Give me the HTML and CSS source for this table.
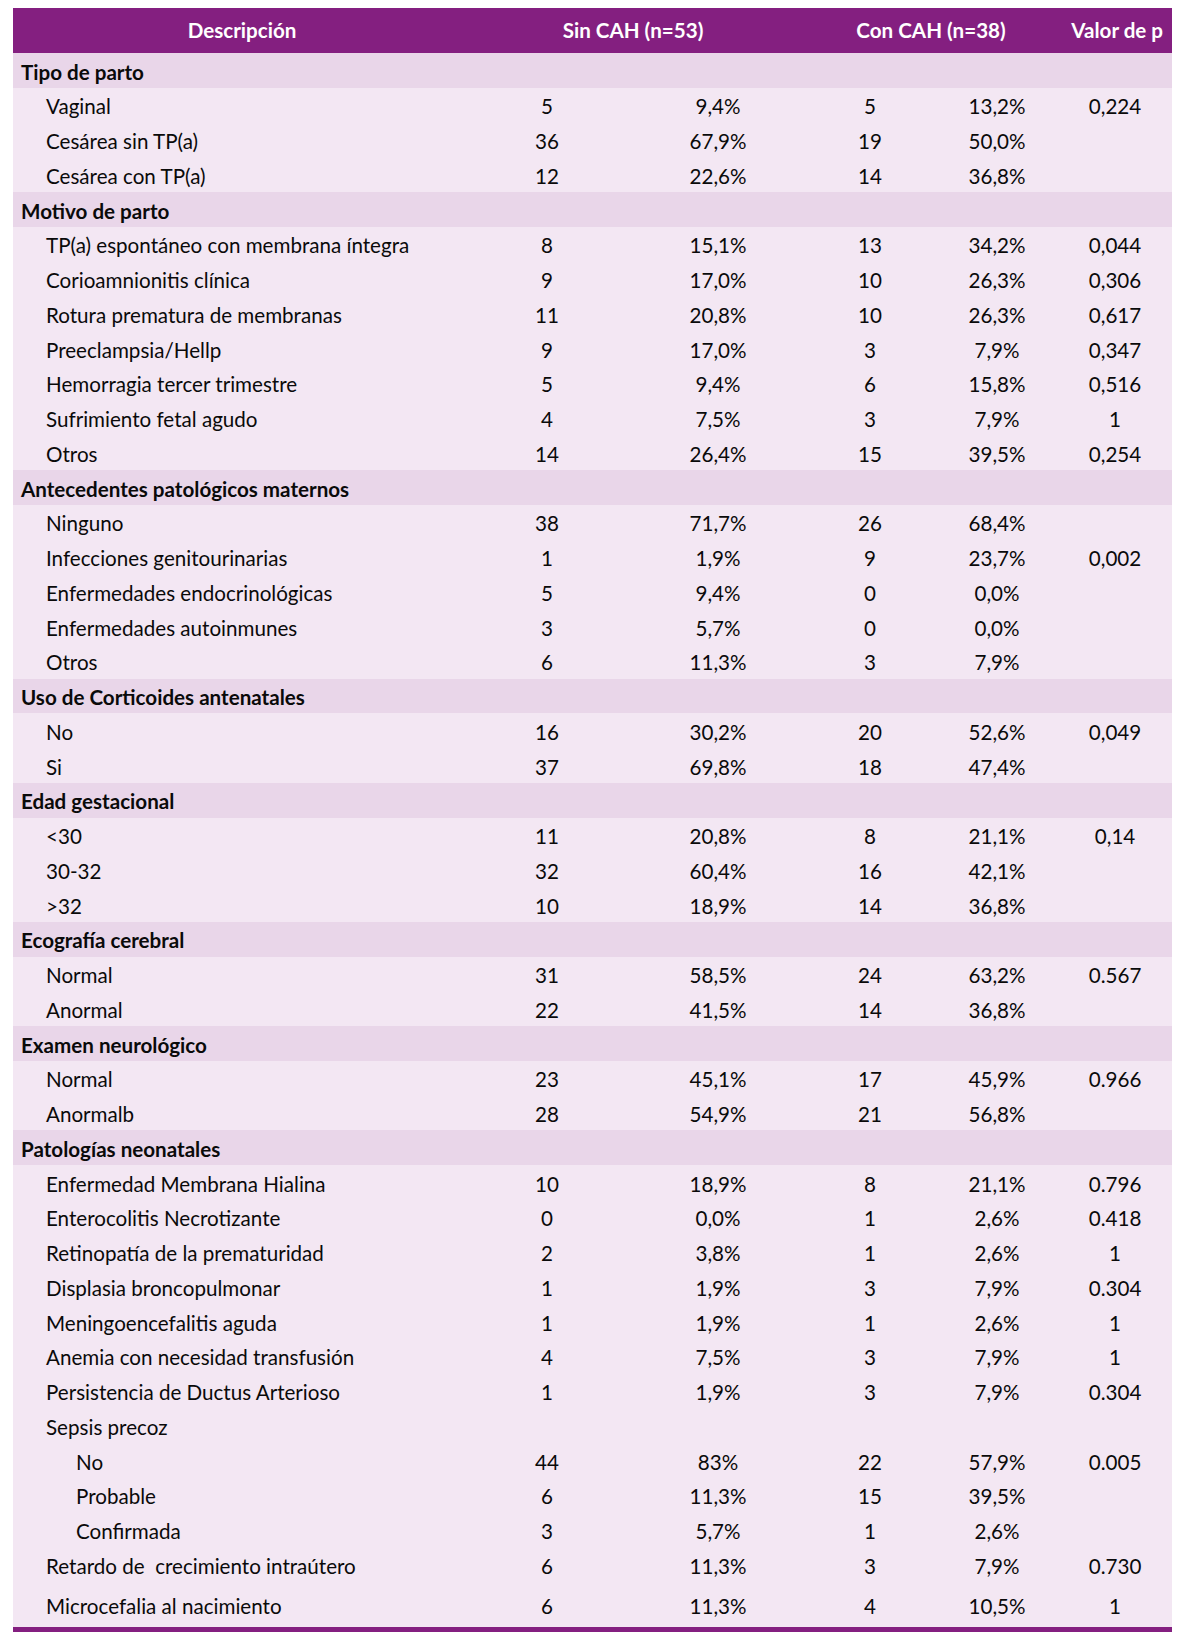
FILE: index.html
```html
<!DOCTYPE html>
<html lang="es">
<head>
<meta charset="utf-8">
<title>Tabla</title>
<link rel="stylesheet" href="styles.css">
</head>
<body>
<div class="wrap">
<table class="t">
<colgroup>
<col class="c-desc"><col class="c-sn"><col class="c-sp"><col class="c-cn"><col class="c-cp"><col class="c-p">
</colgroup>
<thead>
<tr><th class="hd">Descripción</th><th colspan="2">Sin CAH (n=53)</th><th colspan="2">Con CAH (n=38)</th><th class="hp">Valor de p</th></tr>
</thead>
<tbody>
<tr class="sec"><td colspan="6">Tipo de parto</td></tr>
<tr><td class="l1">Vaginal</td><td>5</td><td>9,4%</td><td>5</td><td>13,2%</td><td>0,224</td></tr>
<tr><td class="l1">Cesárea sin TP(a)</td><td>36</td><td>67,9%</td><td>19</td><td>50,0%</td><td></td></tr>
<tr><td class="l1">Cesárea con TP(a)</td><td>12</td><td>22,6%</td><td>14</td><td>36,8%</td><td></td></tr>
<tr class="sec"><td colspan="6">Motivo de parto</td></tr>
<tr><td class="l1">TP(a) espontáneo con membrana íntegra</td><td>8</td><td>15,1%</td><td>13</td><td>34,2%</td><td>0,044</td></tr>
<tr><td class="l1">Corioamnionitis clínica</td><td>9</td><td>17,0%</td><td>10</td><td>26,3%</td><td>0,306</td></tr>
<tr><td class="l1">Rotura prematura de membranas</td><td>11</td><td>20,8%</td><td>10</td><td>26,3%</td><td>0,617</td></tr>
<tr><td class="l1">Preeclampsia/Hellp</td><td>9</td><td>17,0%</td><td>3</td><td>7,9%</td><td>0,347</td></tr>
<tr><td class="l1">Hemorragia tercer trimestre</td><td>5</td><td>9,4%</td><td>6</td><td>15,8%</td><td>0,516</td></tr>
<tr><td class="l1">Sufrimiento fetal agudo</td><td>4</td><td>7,5%</td><td>3</td><td>7,9%</td><td>1</td></tr>
<tr><td class="l1">Otros</td><td>14</td><td>26,4%</td><td>15</td><td>39,5%</td><td>0,254</td></tr>
<tr class="sec"><td colspan="6">Antecedentes patológicos maternos</td></tr>
<tr><td class="l1">Ninguno</td><td>38</td><td>71,7%</td><td>26</td><td>68,4%</td><td></td></tr>
<tr><td class="l1">Infecciones genitourinarias</td><td>1</td><td>1,9%</td><td>9</td><td>23,7%</td><td>0,002</td></tr>
<tr><td class="l1">Enfermedades endocrinológicas</td><td>5</td><td>9,4%</td><td>0</td><td>0,0%</td><td></td></tr>
<tr><td class="l1">Enfermedades autoinmunes</td><td>3</td><td>5,7%</td><td>0</td><td>0,0%</td><td></td></tr>
<tr><td class="l1">Otros</td><td>6</td><td>11,3%</td><td>3</td><td>7,9%</td><td></td></tr>
<tr class="sec"><td colspan="6">Uso de Corticoides antenatales</td></tr>
<tr><td class="l1">No</td><td>16</td><td>30,2%</td><td>20</td><td>52,6%</td><td>0,049</td></tr>
<tr><td class="l1">Si</td><td>37</td><td>69,8%</td><td>18</td><td>47,4%</td><td></td></tr>
<tr class="sec"><td colspan="6">Edad gestacional</td></tr>
<tr><td class="l1">&lt;30</td><td>11</td><td>20,8%</td><td>8</td><td>21,1%</td><td>0,14</td></tr>
<tr><td class="l1">30-32</td><td>32</td><td>60,4%</td><td>16</td><td>42,1%</td><td></td></tr>
<tr><td class="l1">&gt;32</td><td>10</td><td>18,9%</td><td>14</td><td>36,8%</td><td></td></tr>
<tr class="sec"><td colspan="6">Ecografía cerebral</td></tr>
<tr><td class="l1">Normal</td><td>31</td><td>58,5%</td><td>24</td><td>63,2%</td><td>0.567</td></tr>
<tr><td class="l1">Anormal</td><td>22</td><td>41,5%</td><td>14</td><td>36,8%</td><td></td></tr>
<tr class="sec"><td colspan="6">Examen neurológico</td></tr>
<tr><td class="l1">Normal</td><td>23</td><td>45,1%</td><td>17</td><td>45,9%</td><td>0.966</td></tr>
<tr><td class="l1">Anormalb</td><td>28</td><td>54,9%</td><td>21</td><td>56,8%</td><td></td></tr>
<tr class="sec"><td colspan="6">Patologías neonatales</td></tr>
<tr><td class="l1">Enfermedad Membrana Hialina</td><td>10</td><td>18,9%</td><td>8</td><td>21,1%</td><td>0.796</td></tr>
<tr><td class="l1">Enterocolitis Necrotizante</td><td>0</td><td>0,0%</td><td>1</td><td>2,6%</td><td>0.418</td></tr>
<tr><td class="l1">Retinopatía de la prematuridad</td><td>2</td><td>3,8%</td><td>1</td><td>2,6%</td><td>1</td></tr>
<tr><td class="l1">Displasia broncopulmonar</td><td>1</td><td>1,9%</td><td>3</td><td>7,9%</td><td>0.304</td></tr>
<tr><td class="l1">Meningoencefalitis aguda</td><td>1</td><td>1,9%</td><td>1</td><td>2,6%</td><td>1</td></tr>
<tr><td class="l1">Anemia con necesidad transfusión</td><td>4</td><td>7,5%</td><td>3</td><td>7,9%</td><td>1</td></tr>
<tr><td class="l1">Persistencia de Ductus Arterioso</td><td>1</td><td>1,9%</td><td>3</td><td>7,9%</td><td>0.304</td></tr>
<tr><td class="l1">Sepsis precoz</td><td></td><td></td><td></td><td></td><td></td></tr>
<tr><td class="l2">No</td><td>44</td><td>83%</td><td>22</td><td>57,9%</td><td>0.005</td></tr>
<tr><td class="l2">Probable</td><td>6</td><td>11,3%</td><td>15</td><td>39,5%</td><td></td></tr>
<tr><td class="l2">Confirmada</td><td>3</td><td>5,7%</td><td>1</td><td>2,6%</td><td></td></tr>
<tr><td class="l1">Retardo de &nbsp;crecimiento intraútero</td><td>6</td><td>11,3%</td><td>3</td><td>7,9%</td><td>0.730</td></tr>
<tr class="last"><td class="l1">Microcefalia al nacimiento</td><td>6</td><td>11,3%</td><td>4</td><td>10,5%</td><td>1</td></tr>
</tbody>
</table>
</div>
</body>
</html>
```
FILE: styles.css
```css
html, body {
  margin: 0;
  padding: 0;
  background: #ffffff;
}
.wrap {
  padding: 8px 11px 0 13px;
}
.t {
  width: 1159px;
  border-collapse: collapse;
  table-layout: fixed;
  font-family: Lato, "Open Sans", sans-serif;
  font-size: 20.6px;
  color: #0a0a0a;
  border-bottom: 5px solid #841f80;
}
.c-desc { width: 449px; }
.c-sn { width: 170px; }
.c-sp { width: 172px; }
.c-cn { width: 132px; }
.c-cp { width: 122px; }
.c-p { width: 114px; }
.t th {
  background: #841f80;
  color: #ffffff;
  font-weight: 700;
  height: 45px;
  padding: 0;
  text-align: center;
  vertical-align: middle;
  line-height: 1.2;
}
.t th.hd {
  padding-left: 9px;
}
.t th.hp {
  text-align: right;
  padding-right: 9px;
}
.t td {
  padding: 3px 0 0 0;
  height: 31.75px;
  text-align: center;
  vertical-align: middle;
  line-height: 1.2;
  background: #f3e7f3;
  white-space: nowrap;
}
.t tr.sec td {
  background: #e9d6e9;
  font-weight: 700;
  text-align: left;
  padding-left: 8px;
}
.t td.l1 {
  text-align: left;
  padding-left: 33px;
}
.t td.l2 {
  text-align: left;
  padding-left: 63px;
}
.t tr.last td {
  height: 42px;
}
```
